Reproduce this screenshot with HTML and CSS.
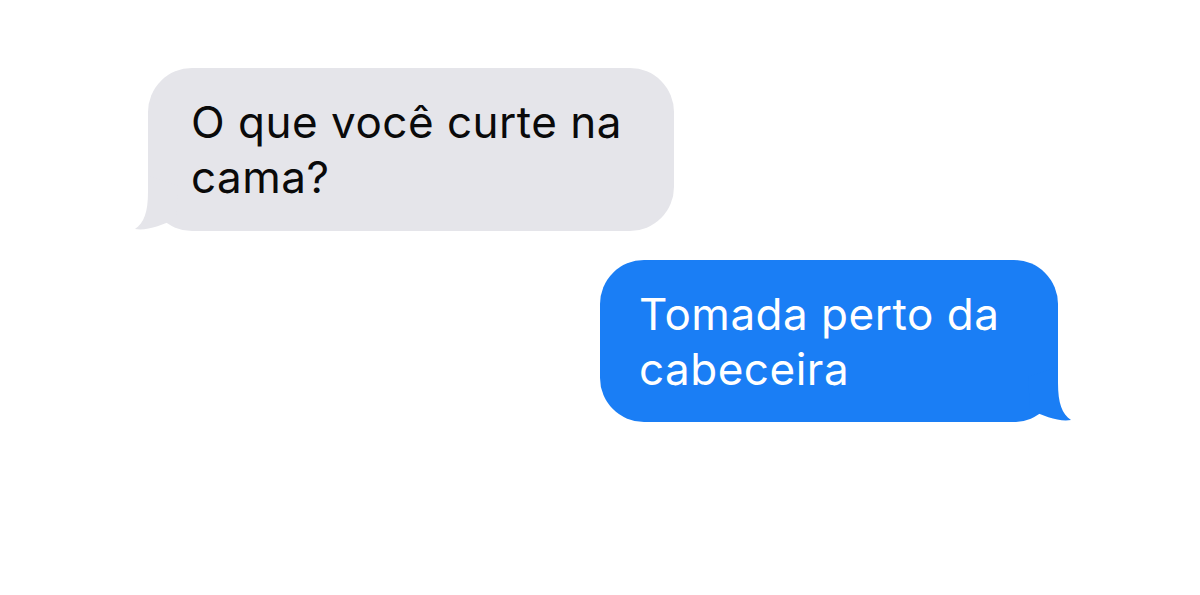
FILE: index.html
```html
<!DOCTYPE html>
<html lang="pt-BR">
<head>
<meta charset="utf-8">
<title>Mensagens</title>
<link rel="stylesheet" href="styles.css">
</head>
<body>
<main class="thread">
  <div class="row row-in">
    <div class="bubble bubble-in">
      <p class="msg">O que você curte na cama?</p>
      <svg class="tail tail-in" width="50" height="63" viewBox="0 0 50 63" aria-hidden="true">
        <path d="M14 8 L14 24 C14 44 10 55 1 61 C12 63 28 58 42 50 L44 18 Z" fill="#e5e5ea"/>
      </svg>
    </div>
  </div>
  <div class="row row-out">
    <div class="bubble bubble-out">
      <p class="msg">Tomada perto da cabeceira</p>
      <svg class="tail tail-out" width="50" height="63" viewBox="0 0 50 63" aria-hidden="true">
        <path d="M36 8 L36 24 C36 44 40 55 49 61 C38 63 22 58 8 50 L6 18 Z" fill="#1a7ef5"/>
      </svg>
    </div>
  </div>
</main>
</body>
</html>
```

FILE: styles.css
```css
* { box-sizing: border-box; }

html, body {
  margin: 0;
  padding: 0;
  background: #ffffff;
}

body {
  width: 1200px;
  height: 595px;
  overflow: hidden;
  font-family: "Inter", "Liberation Sans", sans-serif;
}

.thread {
  display: flex;
  flex-direction: column;
  padding-top: 68px;
}

.row {
  display: flex;
}

.row-in {
  justify-content: flex-start;
  padding-left: 148px;
}

.row-out {
  justify-content: flex-end;
  padding-right: 142px;
  margin-top: 29px;
}

.bubble {
  position: relative;
  border-radius: 44px;
}

.bubble-in {
  width: 526px;
  height: 163px;
  background: #e5e5ea;
  color: #0a0a0a;
  padding: 27px 20px 0 43px;
}

.bubble-out {
  width: 458px;
  height: 162px;
  background: #1a7ef5;
  color: #ffffff;
  padding: 27px 20px 0 39px;
}

.msg {
  margin: 0;
  font-size: 44px;
  line-height: 55px;
  letter-spacing: 0.5px;
  font-weight: 400;
}

.tail {
  position: absolute;
  bottom: 0;
  display: block;
}

.tail-in { left: -14px; }
.tail-out { right: -14px; }
```
